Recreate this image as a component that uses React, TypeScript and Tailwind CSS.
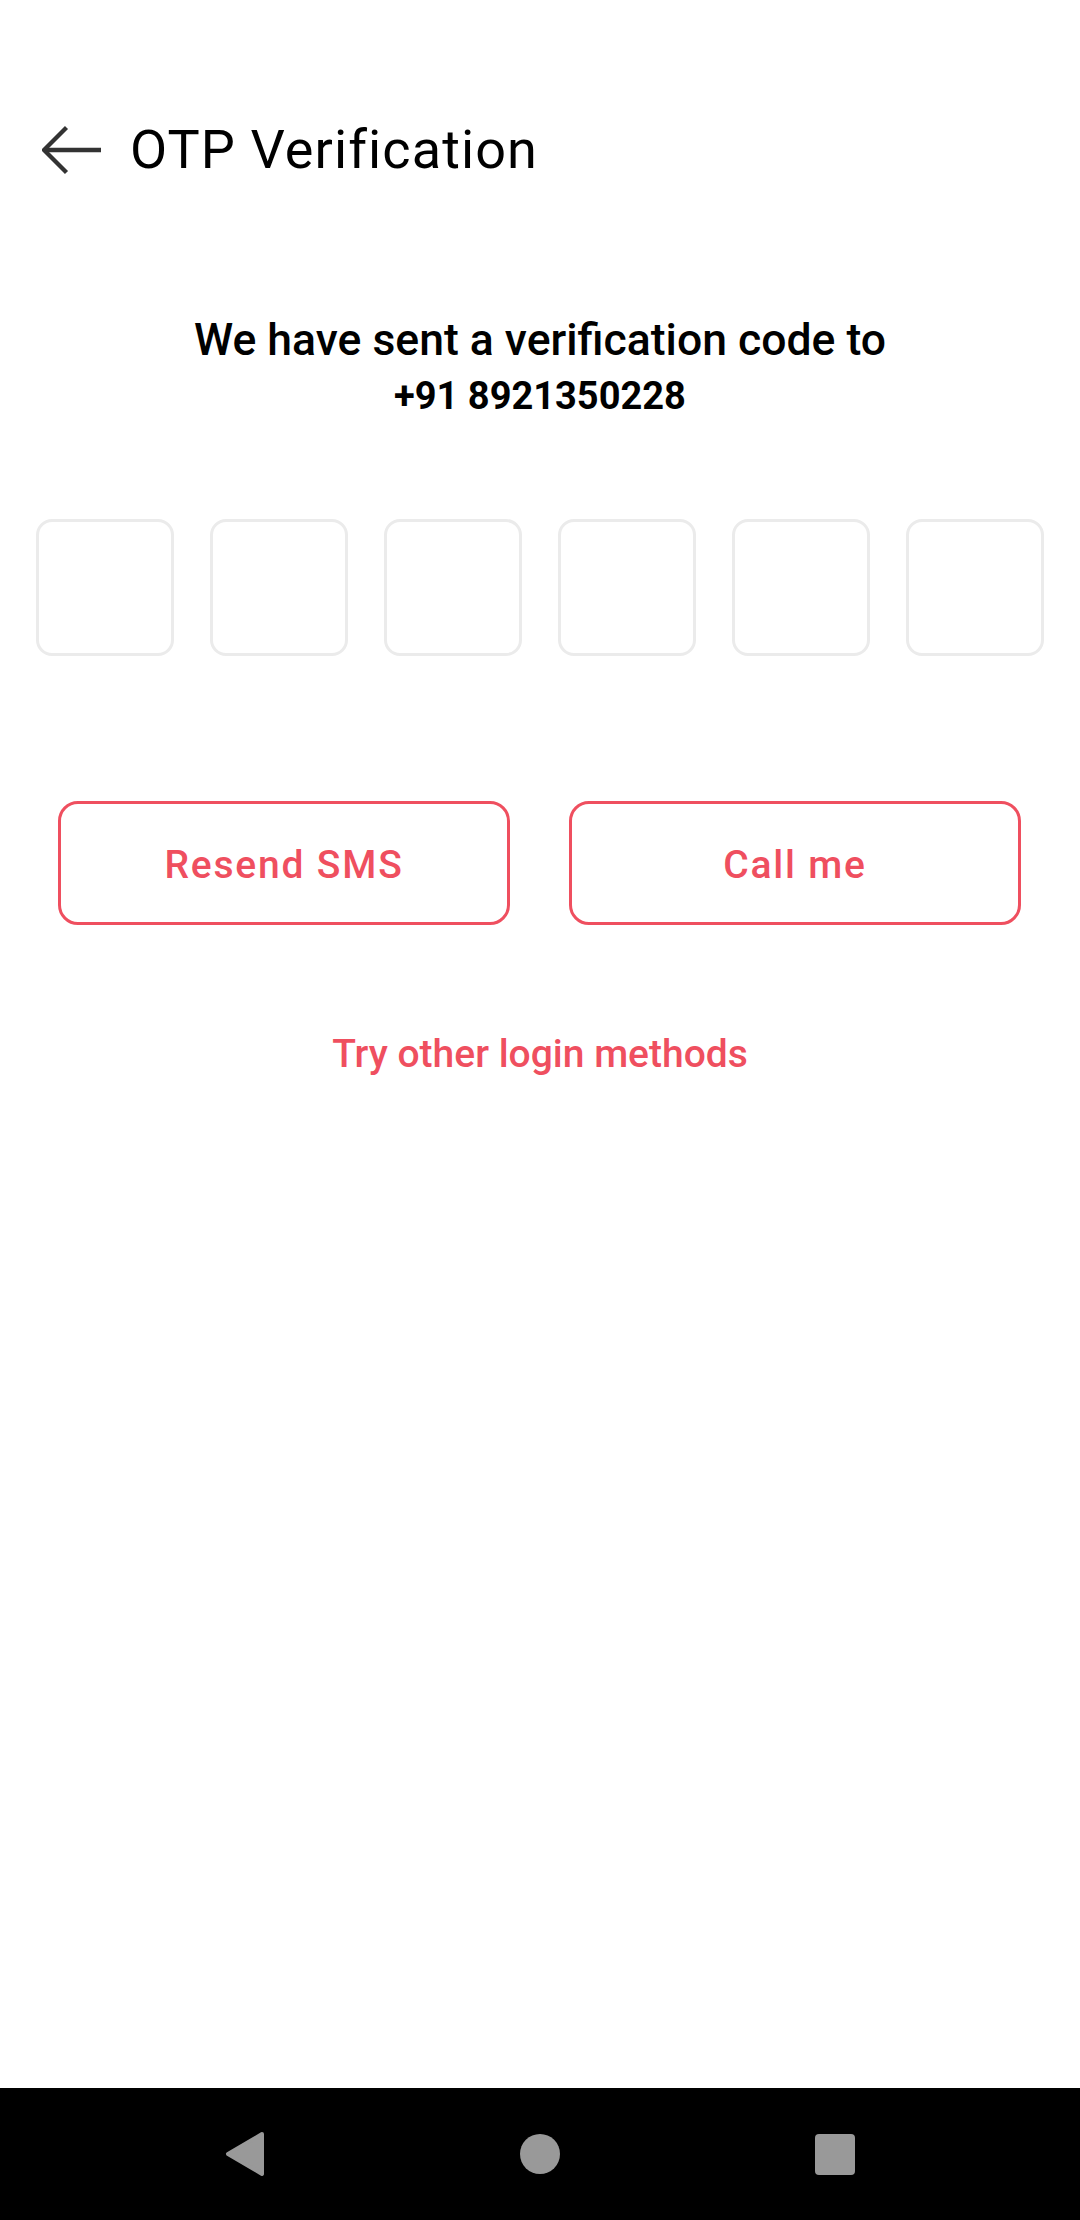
import React from 'react';

const RED = 'text-[#ef4f5f]';

function BackArrow() {
  return (
    <svg width="60" height="50" viewBox="0 0 60 50" fill="none" className="shrink-0">
      <path d="M2 25 H59" stroke="#333333" strokeWidth="4.3" />
      <path d="M24.5 2.5 L2 25 L24.5 47.5" stroke="#333333" strokeWidth="4.3" />
    </svg>
  );
}

function OtpBox() {
  return <div className="w-[138px] h-[137px] rounded-[16px] border-[3px] border-[#ebebeb] bg-white" />;
}

function NavBar() {
  return (
    <div className="h-[132px] bg-black flex items-center justify-center gap-[215px] shrink-0">
      <div className="w-[80px] flex justify-center">
        <svg width="40" height="46" viewBox="0 0 40 46">
          <polygon points="37,3 3,23 37,43" fill="#999999" stroke="#999999" strokeWidth="4" strokeLinejoin="round" />
        </svg>
      </div>
      <div className="w-[80px] flex justify-center">
        <div className="w-[40px] h-[40px] rounded-full bg-[#999999]" />
      </div>
      <div className="w-[80px] flex justify-center">
        <div className="w-[40px] h-[41px] rounded-[4px] bg-[#999999]" />
      </div>
    </div>
  );
}

export default function App() {
  return (
    <div className="min-h-[2220px] w-[1080px] bg-white flex flex-col font-['Roboto',sans-serif]">
      <div className="flex-1">
        {/* Header */}
        <div className="mt-[110px] h-[80px] flex items-center pl-[42px]">
          <BackArrow />
          <h1 className="ml-[28px] text-[54px] leading-[54px] font-normal tracking-[1.1px] text-black">
            OTP Verification
          </h1>
        </div>

        {/* Message */}
        <div className="mt-[124px] text-center text-black">
          <p className="text-[44.5px] leading-[52px] font-medium">We have sent a verification code to</p>
          <p className="mt-[4px] text-[38px] leading-[52px] font-bold">+91 8921350228</p>
        </div>

        {/* OTP inputs */}
        <div className="mt-[97px] px-[36px] flex gap-[36px]">
          {[0, 1, 2, 3, 4, 5].map((i) => (
            <OtpBox key={i} />
          ))}
        </div>

        {/* Actions */}
        <div className="mt-[145px] px-[58px] flex gap-[59px]">
          <button className={`w-[452px] h-[124px] pt-[5px] rounded-[20px] border-[3px] border-[#ef4f5f] bg-white ${RED} text-[39px] font-medium tracking-[1.8px]`}>
            Resend SMS
          </button>
          <button className={`w-[452px] h-[124px] pt-[5px] rounded-[20px] border-[3px] border-[#ef4f5f] bg-white ${RED} text-[39px] font-medium tracking-[1.8px]`}>
            Call me
          </button>
        </div>

        <p className={`mt-[104px] text-center text-[39px] leading-[50px] font-medium ${RED}`}>
          Try other login methods
        </p>
      </div>

      <NavBar />
    </div>
  );
}
